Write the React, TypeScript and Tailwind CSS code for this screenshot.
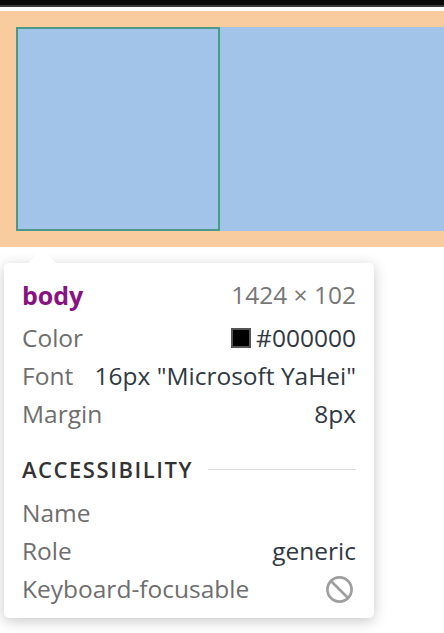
import { Ban } from 'lucide-react';

const font = { fontFamily: '"Open Sans", "Noto Sans", sans-serif' };

function Row({ label, children }: { label: string; children?: React.ReactNode }) {
  return (
    <div className="flex h-[38px] items-center justify-between">
      <span className="text-[#6e6e6e]">{label}</span>
      {children}
    </div>
  );
}

export default function App() {
  return (
    <div className="relative h-[633px] w-[444px] overflow-hidden bg-white" style={font}>
      {/* window chrome */}
      <div className="h-[5px] bg-[#0a0a0a]" />
      <div className="h-[2px] bg-[#3a3a3a]" />
      <div className="h-[4px] bg-white" />

      {/* highlighted body: margin + content */}
      <div className="bg-[#f8cc9e] py-4 pl-4">
        <div className="flex h-[204px] bg-[#a1c4e8]">
          <div className="h-[204px] w-[204px] border-2 border-[#4a9a8a]" />
        </div>
      </div>

      {/* inspect tooltip */}
      <div className="absolute left-[4px] top-[263px] w-[370px] rounded-[5px] bg-white px-[18px] pb-[10px] pt-[13px] text-[24.5px] leading-none shadow-[0_3px_14px_rgba(0,0,0,0.22)]">
        <div className="absolute -top-[13px] left-[24px] h-0 w-0 border-x-[14px] border-b-[13px] border-x-transparent border-b-white" />

        <div className="flex h-[38px] items-center justify-between">
          <span className="text-[25px] font-bold text-[#881280]">body</span>
          <span className="text-[#777777]">1424 × 102</span>
        </div>

        <div className="mt-[5px]">
          <Row label="Color">
            <span className="flex items-center gap-[5px] text-[#303942]">
              <span className="h-[20px] w-[20px] border-2 border-[#555555] bg-black" />
              #000000
            </span>
          </Row>
          <Row label="Font">
            <span className="text-[#303942]">16px "Microsoft YaHei"</span>
          </Row>
          <Row label="Margin">
            <span className="text-[#303942]">8px</span>
          </Row>
        </div>

        <div className="mt-[17px] flex h-[38px] items-center gap-[15px]">
          <span className="text-[22px] font-semibold tracking-[0.07em] text-[#333333]">ACCESSIBILITY</span>
          <div className="h-px flex-1 bg-[#dddddd]" />
        </div>

        <div className="mt-[6px]">
          <Row label="Name" />
          <Row label="Role">
            <span className="text-[#303942]">generic</span>
          </Row>
          <Row label="Keyboard-focusable">
            <Ban className="mr-[2px] h-[29px] w-[29px] text-[#9e9e9e]" strokeWidth={2.2} />
          </Row>
        </div>
      </div>
    </div>
  );
}
